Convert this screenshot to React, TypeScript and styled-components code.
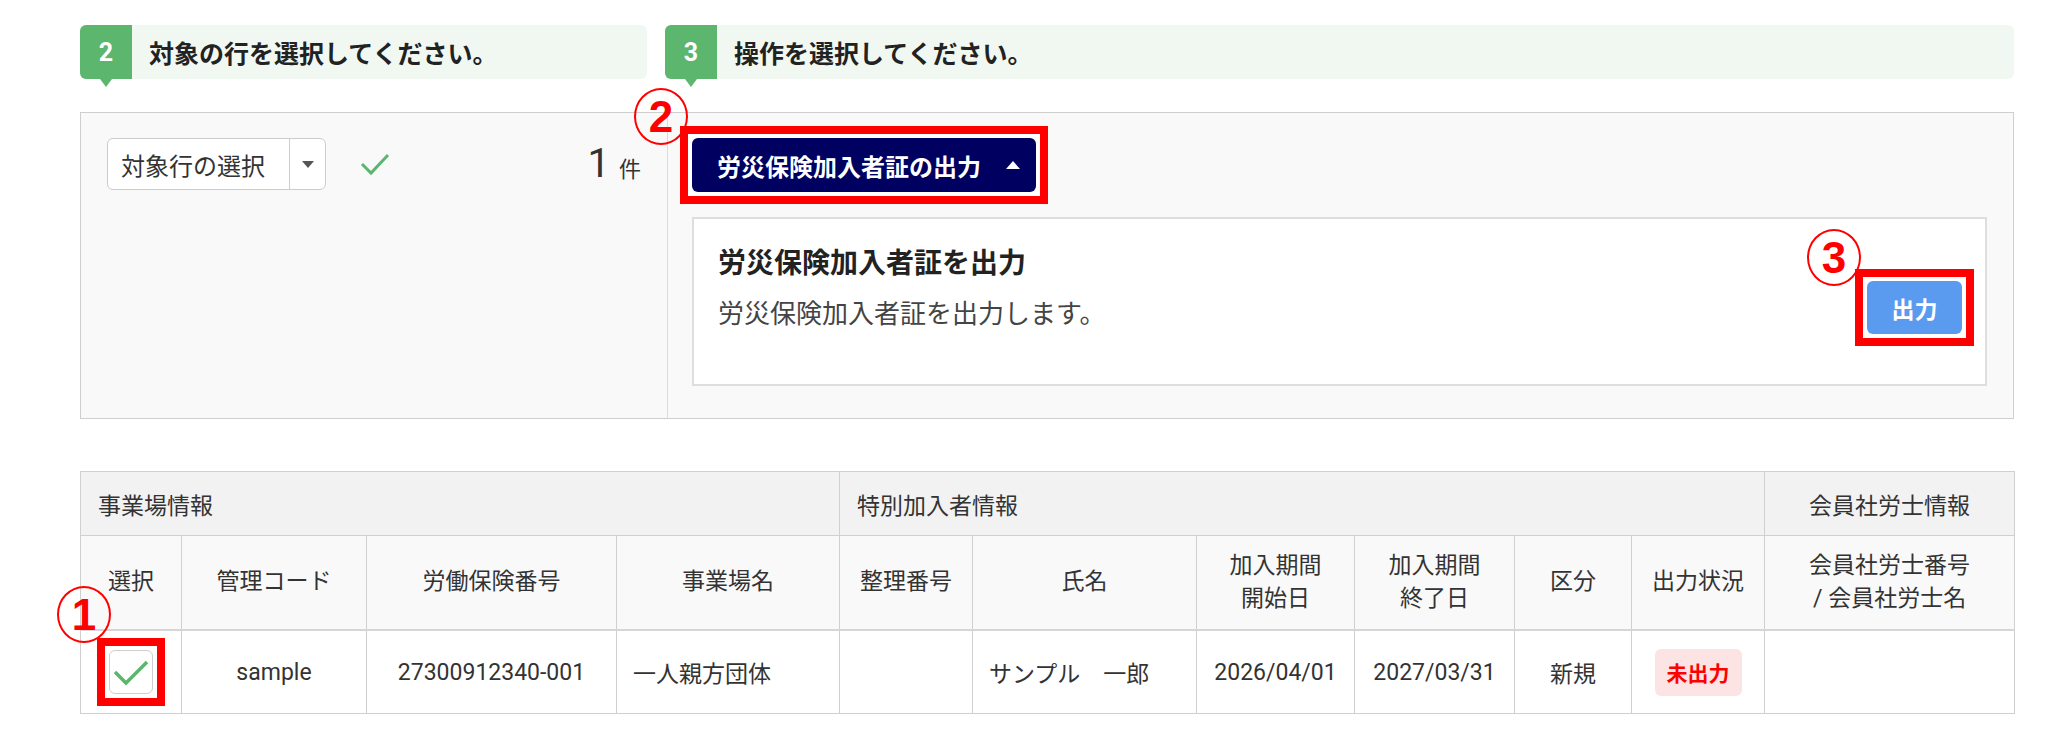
import React from "react";
import styled, { createGlobalStyle } from "styled-components";

const GlobalStyle = createGlobalStyle`
  html, body {
    margin: 0;
    padding: 0;
    background: #fff;
  }
  body {
    font-family: Roboto, "Noto Sans CJK JP", "Noto Sans", sans-serif;
    color: #333;
  }
`;

const Page = styled.div`
  width: 1934px;
  margin-left: 80px;
  padding-top: 25px;
`;

/* ---------- steps ---------- */

const StepRow = styled.div`
  display: grid;
  grid-template-columns: 567px 1fr;
  column-gap: 18px;
`;

const StepBar = styled.div`
  display: flex;
  align-items: center;
  height: 54px;
  background: #f1f8f2;
  border-radius: 6px;
`;

const StepNum = styled.div`
  position: relative;
  width: 52px;
  height: 100%;
  display: flex;
  align-items: center;
  justify-content: center;
  background: #5cb66e;
  color: #fff;
  font-size: 25px;
  font-weight: 700;
  border-radius: 6px 0 0 6px;

  &::after {
    content: "";
    position: absolute;
    left: 50%;
    bottom: -8px;
    transform: translateX(-50%);
    border-left: 6px solid transparent;
    border-right: 6px solid transparent;
    border-top: 8px solid #5cb66e;
  }
`;

const StepText = styled.span`
  padding-left: 17px;
  font-size: 25px;
  font-weight: 700;
  color: #222;
`;

/* ---------- annotations ---------- */

const Marked = styled.span`
  position: relative;
  display: inline-flex;
  vertical-align: middle;
  border: 8px solid #f00;
  padding: 4px;
  margin: -12px;
  background: #fff;
`;

const Circled = styled.span<{ $left: number; $top: number }>`
  position: absolute;
  left: ${(p) => p.$left}px;
  top: ${(p) => p.$top}px;
  width: 54px;
  height: 57px;
  box-sizing: border-box;
  display: flex;
  align-items: center;
  justify-content: center;
  border: 2.5px solid #f00;
  border-radius: 50%;
  color: #f00;
  font-family: "Liberation Sans", Arial, sans-serif;
  font-size: 44px;
  font-weight: 700;
  line-height: 1;
  z-index: 2;
`;

/* ---------- panel ---------- */

const Panel = styled.section`
  margin-top: 33px;
  display: grid;
  grid-template-columns: 586px 1fr;
  height: 307px;
  box-sizing: border-box;
  border: 1px solid #cfcfcf;
  background: #f9f9f9;
`;

const SelectSide = styled.div`
  padding: 25px 26px 0 26px;
`;

const SelectRow = styled.div`
  display: flex;
  align-items: center;
  height: 52px;
`;

const Dropdown = styled.div`
  display: flex;
  height: 52px;
  box-sizing: border-box;
  border: 1px solid #ccc;
  border-radius: 6px;
  background: #fff;
  overflow: hidden;
`;

const DropLabel = styled.span`
  display: flex;
  align-items: center;
  padding: 0 24px 0 13px;
  font-size: 24px;
  color: #333;
`;

const DropArrow = styled.span`
  width: 35px;
  border-left: 1px solid #ccc;
  display: flex;
  align-items: center;
  justify-content: center;

  &::before {
    content: "";
    border-left: 6px solid transparent;
    border-right: 6px solid transparent;
    border-top: 7px solid #555;
  }
`;

const CheckIcon = styled.svg`
  margin-left: 34px;
`;

const Count = styled.div`
  margin-left: auto;
  display: flex;
  align-items: baseline;
  gap: 9px;
  color: #333;
`;

const CountNum = styled.span`
  font-size: 40px;
  font-weight: 400;
  line-height: 1;
`;

const CountUnit = styled.span`
  font-size: 22px;
`;

const ActionSide = styled.div`
  border-left: 1px solid #dcdcdc;
  padding: 25px 26px 32px 24px;
  display: flex;
  flex-direction: column;
  align-items: flex-start;
  gap: 25px;
`;

const ActionButton = styled.button`
  display: inline-flex;
  align-items: center;
  gap: 25px;
  height: 54px;
  padding: 0 16px 0 25px;
  border: none;
  border-radius: 6px;
  background: #000060;
  color: #fff;
  font-family: inherit;
  font-size: 24px;
  font-weight: 700;

  &::after {
    content: "";
    border-left: 7px solid transparent;
    border-right: 7px solid transparent;
    border-bottom: 8px solid #fff;
  }
`;

const Card = styled.div`
  align-self: stretch;
  display: flex;
  align-items: center;
  height: 169px;
  box-sizing: border-box;
  border: 2px solid #dedede;
  background: #fff;
  padding: 0 23px 0 24px;
`;

const CardText = styled.div`
  align-self: flex-start;
  padding-top: 25px;
  flex: 1;
`;

const CardTitle = styled.div`
  font-size: 28px;
  font-weight: 700;
  line-height: 1.4;
  color: #222;
`;

const CardDesc = styled.div`
  margin-top: 12px;
  font-size: 26px;
  line-height: 1.5;
  color: #444;
`;

const OutputMark = styled(Marked)`
  margin: -6px -12px -18px;
`;

const OutputButton = styled.button`
  width: 95px;
  height: 53px;
  border: none;
  border-radius: 6px;
  background: #5b9bef;
  color: #fff;
  font-family: inherit;
  font-size: 23px;
  font-weight: 700;
`;

/* ---------- table ---------- */

const Table = styled.table`
  margin-top: 52px;
  width: 1934px;
  border-collapse: collapse;
  table-layout: fixed;
  font-size: 23px;
  color: #333;
`;

const GroupCell = styled.th<{ $align?: "left" | "center" }>`
  height: 63px;
  padding: 0 17px;
  background: #f2f2f2;
  border: 1px solid #d0d0d0;
  font-weight: 400;
  text-align: ${(p) => p.$align ?? "left"};
`;

const HeadCell = styled.th`
  height: 93px;
  padding: 0 8px;
  background: #f9f9f9;
  border: 1px solid #d0d0d0;
  font-weight: 400;
  line-height: 1.4;
  text-align: center;
`;

const Cell = styled.td<{ $align?: "left" | "center" }>`
  height: 82px;
  padding: 0 16px;
  border: 1px solid #d0d0d0;
  border-top: 2px solid #d6d6d6;
  text-align: ${(p) => p.$align ?? "center"};
  vertical-align: middle;
`;

const CheckBox = styled.span`
  width: 44px;
  height: 44px;
  box-sizing: border-box;
  display: flex;
  align-items: center;
  justify-content: center;
  border: 1.5px solid #cfcfcf;
  border-radius: 6px;
  background: #fff;
`;

const Badge = styled.span`
  display: inline-flex;
  align-items: center;
  justify-content: center;
  width: 87px;
  height: 47px;
  border-radius: 6px;
  background: #fce4e4;
  color: #f00;
  font-size: 21px;
  font-weight: 700;
`;

const colWidths = [101, 185, 250, 223, 133, 224, 158, 160, 117, 133, 250];

const headers: React.ReactNode[] = [
  "選択",
  "管理コード",
  "労働保険番号",
  "事業場名",
  "整理番号",
  "氏名",
  <>
    加入期間
    <br />
    開始日
  </>,
  <>
    加入期間
    <br />
    終了日
  </>,
  "区分",
  "出力状況",
  <>
    会員社労士番号
    <br />/ 会員社労士名
  </>,
];

export default function App() {
  return (
    <>
      <GlobalStyle />
      <Page>
        <StepRow>
          <StepBar>
            <StepNum>2</StepNum>
            <StepText>対象の行を選択してください。</StepText>
          </StepBar>
          <StepBar>
            <StepNum>3</StepNum>
            <StepText>操作を選択してください。</StepText>
          </StepBar>
        </StepRow>

        <Panel>
          <SelectSide>
            <SelectRow>
              <Dropdown>
                <DropLabel>対象行の選択</DropLabel>
                <DropArrow />
              </Dropdown>
              <CheckIcon width="30" height="24" viewBox="0 0 30 24">
                <polyline
                  points="2,12 11,21 28,3"
                  fill="none"
                  stroke="#5cb66e"
                  strokeWidth="3"
                />
              </CheckIcon>
              <Count>
                <CountNum>1</CountNum>
                <CountUnit>件</CountUnit>
              </Count>
            </SelectRow>
          </SelectSide>

          <ActionSide>
            <Marked>
              <Circled $left={-54} $top={-46}>2</Circled>
              <ActionButton>労災保険加入者証の出力</ActionButton>
            </Marked>
            <Card>
              <CardText>
                <CardTitle>労災保険加入者証を出力</CardTitle>
                <CardDesc>労災保険加入者証を出力します。</CardDesc>
              </CardText>
              <OutputMark>
                <Circled $left={-56} $top={-48}>3</Circled>
                <OutputButton>出力</OutputButton>
              </OutputMark>
            </Card>
          </ActionSide>
        </Panel>

        <Table>
          <colgroup>
            {colWidths.map((w, i) => (
              <col key={i} style={{ width: w }} />
            ))}
          </colgroup>
          <thead>
            <tr>
              <GroupCell colSpan={4}>事業場情報</GroupCell>
              <GroupCell colSpan={6}>特別加入者情報</GroupCell>
              <GroupCell $align="center">会員社労士情報</GroupCell>
            </tr>
            <tr>
              {headers.map((h, i) => (
                <HeadCell key={i}>{h}</HeadCell>
              ))}
            </tr>
          </thead>
          <tbody>
            <tr>
              <Cell>
                <Marked>
                  <Circled $left={-48} $top={-60}>1</Circled>
                  <CheckBox>
                    <svg width="38" height="28" viewBox="0 0 38 28">
                      <polyline
                        points="3,14 14,25 35,4"
                        fill="none"
                        stroke="#5cb66e"
                        strokeWidth="3.5"
                      />
                    </svg>
                  </CheckBox>
                </Marked>
              </Cell>
              <Cell>sample</Cell>
              <Cell>27300912340-001</Cell>
              <Cell $align="left">一人親方団体</Cell>
              <Cell />
              <Cell $align="left">サンプル　一郎</Cell>
              <Cell>2026/04/01</Cell>
              <Cell>2027/03/31</Cell>
              <Cell>新規</Cell>
              <Cell>
                <Badge>未出力</Badge>
              </Cell>
              <Cell />
            </tr>
          </tbody>
        </Table>
      </Page>
    </>
  );
}
